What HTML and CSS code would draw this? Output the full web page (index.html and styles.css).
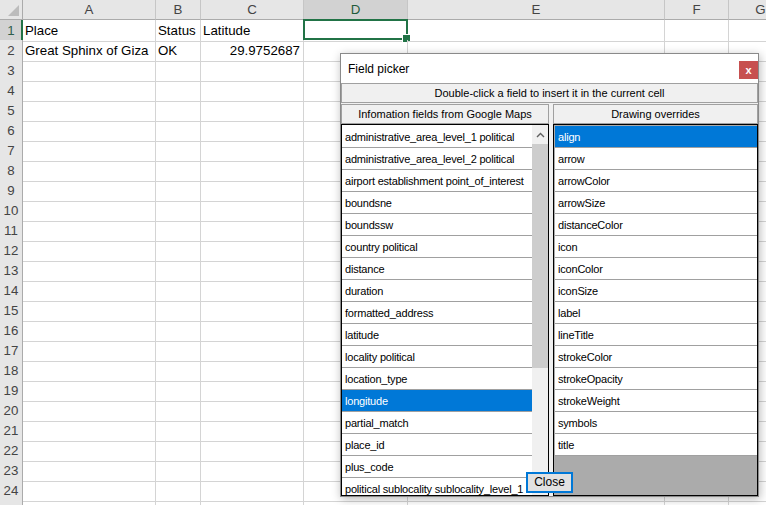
FILE: index.html
```html
<!DOCTYPE html>
<html>
<head>
<meta charset="utf-8">
<title>Field picker</title>
<link rel="stylesheet" href="styles.css">
</head>
<body>
<div class="sheet">
  <div class="row head"><div class="corner"></div><div>A</div><div>B</div><div>C</div><div class="hsel">D</div><div>E</div><div>F</div><div>G</div></div>
  <div class="row"><div class="rh rsel">1</div><div>Place</div><div>Status</div><div>Latitude</div><div class="active"><span class="cursor"></span></div><div></div><div></div><div></div></div>
  <div class="row"><div class="rh">2</div><div>Great Sphinx of Giza</div><div>OK</div><div class="num">29.9752687</div><div></div><div></div><div></div><div></div></div>
  <div class="row"><div class="rh">3</div><div></div><div></div><div></div><div></div><div></div><div></div><div></div></div>
  <div class="row"><div class="rh">4</div><div></div><div></div><div></div><div></div><div></div><div></div><div></div></div>
  <div class="row"><div class="rh">5</div><div></div><div></div><div></div><div></div><div></div><div></div><div></div></div>
  <div class="row"><div class="rh">6</div><div></div><div></div><div></div><div></div><div></div><div></div><div></div></div>
  <div class="row"><div class="rh">7</div><div></div><div></div><div></div><div></div><div></div><div></div><div></div></div>
  <div class="row"><div class="rh">8</div><div></div><div></div><div></div><div></div><div></div><div></div><div></div></div>
  <div class="row"><div class="rh">9</div><div></div><div></div><div></div><div></div><div></div><div></div><div></div></div>
  <div class="row"><div class="rh">10</div><div></div><div></div><div></div><div></div><div></div><div></div><div></div></div>
  <div class="row"><div class="rh">11</div><div></div><div></div><div></div><div></div><div></div><div></div><div></div></div>
  <div class="row"><div class="rh">12</div><div></div><div></div><div></div><div></div><div></div><div></div><div></div></div>
  <div class="row"><div class="rh">13</div><div></div><div></div><div></div><div></div><div></div><div></div><div></div></div>
  <div class="row"><div class="rh">14</div><div></div><div></div><div></div><div></div><div></div><div></div><div></div></div>
  <div class="row"><div class="rh">15</div><div></div><div></div><div></div><div></div><div></div><div></div><div></div></div>
  <div class="row"><div class="rh">16</div><div></div><div></div><div></div><div></div><div></div><div></div><div></div></div>
  <div class="row"><div class="rh">17</div><div></div><div></div><div></div><div></div><div></div><div></div><div></div></div>
  <div class="row"><div class="rh">18</div><div></div><div></div><div></div><div></div><div></div><div></div><div></div></div>
  <div class="row"><div class="rh">19</div><div></div><div></div><div></div><div></div><div></div><div></div><div></div></div>
  <div class="row"><div class="rh">20</div><div></div><div></div><div></div><div></div><div></div><div></div><div></div></div>
  <div class="row"><div class="rh">21</div><div></div><div></div><div></div><div></div><div></div><div></div><div></div></div>
  <div class="row"><div class="rh">22</div><div></div><div></div><div></div><div></div><div></div><div></div><div></div></div>
  <div class="row"><div class="rh">23</div><div></div><div></div><div></div><div></div><div></div><div></div><div></div></div>
  <div class="row"><div class="rh">24</div><div></div><div></div><div></div><div></div><div></div><div></div><div></div></div>
  <div class="row"><div class="rh"></div><div></div><div></div><div></div><div></div><div></div><div></div><div></div></div>
</div>

<div class="dialog">
  <div class="titlebar">
    <span class="title">Field picker</span>
    <span class="xbtn">x</span>
  </div>
  <div class="hint">Double-click a field to insert it in the current cell</div>
  <div class="panels">
    <div class="panel left">
      <div class="phead">Infomation fields from Google Maps</div>
      <div class="list">
        <ul class="items">
          <li>administrative_area_level_1 political</li>
          <li>administrative_area_level_2 political</li>
          <li>airport establishment point_of_interest</li>
          <li>boundsne</li>
          <li>boundssw</li>
          <li>country political</li>
          <li>distance</li>
          <li>duration</li>
          <li>formatted_address</li>
          <li>latitude</li>
          <li>locality political</li>
          <li>location_type</li>
          <li class="sel">longitude</li>
          <li>partial_match</li>
          <li>place_id</li>
          <li>plus_code</li>
          <li>political sublocality sublocality_level_1</li>
        </ul>
        <div class="scrollbar">
          <div class="up"><svg width="9" height="6" viewBox="0 0 9 6"><path d="M1 5 L4.5 1.5 L8 5" fill="none" stroke="#606060" stroke-width="1.4"/></svg></div>
          <div class="thumb"></div>
        </div>
      </div>
    </div>
    <div class="panel right">
      <div class="phead">Drawing overrides</div>
      <div class="list grey">
        <ul class="items">
          <li class="sel">align</li>
          <li>arrow</li>
          <li>arrowColor</li>
          <li>arrowSize</li>
          <li>distanceColor</li>
          <li>icon</li>
          <li>iconColor</li>
          <li>iconSize</li>
          <li>label</li>
          <li>lineTitle</li>
          <li>strokeColor</li>
          <li>strokeOpacity</li>
          <li>strokeWeight</li>
          <li>symbols</li>
          <li>title</li>
        </ul>
      </div>
    </div>
  </div>
  <button class="close">Close</button>
</div>
</body>
</html>
```
FILE: styles.css
```css
* { box-sizing: border-box; }

body {
  margin: 0;
  width: 766px;
  height: 505px;
  overflow: hidden;
  position: relative;
  background: #fff;
  font-family: "Liberation Sans", Arial, sans-serif;
}

/* ---------- spreadsheet ---------- */
.row {
  display: grid;
  grid-template-columns: 23px 133px 45px 103px 104px 257px 64px 64px;
  height: 20px;
}

.row > div {
  border-right: 1px solid #d4d4d4;
  border-bottom: 1px solid #d4d4d4;
  font-size: 13.3px;
  line-height: 21px;
  padding: 0 2px;
  white-space: nowrap;
  color: #000;
  position: relative;
}

.row > .num { text-align: right; padding-right: 3px; }

.head > div {
  background: #e6e6e6;
  border-right-color: #c6c6c6;
  border-bottom-color: #ababab;
  color: #444;
  text-align: center;
  line-height: 19px;
}

.head > .hsel {
  background: #d2d2d2;
  color: #1d5a3a;
}

.head > .corner {
  border-right-color: #ababab;
}

.head > .corner::after {
  content: "";
  position: absolute;
  right: 3px;
  bottom: 3px;
  width: 0;
  height: 0;
  border-left: 11px solid transparent;
  border-bottom: 11px solid #bcbcbc;
}

.row > .rh {
  background: #e6e6e6;
  border-right-color: #ababab;
  border-bottom-color: #c6c6c6;
  color: #444;
  text-align: center;
  padding: 0;
}

.row > .rsel {
  background: #d2d2d2;
  color: #2f5e4a;
  border-right: 1px solid #217346;
  box-shadow: inset -1px 0 0 #217346;
}

.cursor {
  position: absolute;
  left: -1px;
  top: -1px;
  width: 105px;
  height: 21px;
  border: 2px solid #217346;
}

.cursor::after {
  content: "";
  position: absolute;
  right: -5px;
  bottom: -5px;
  width: 7px;
  height: 7px;
  background: #217346;
  border: 1px solid #fff;
}

/* ---------- dialog ---------- */
.dialog {
  position: absolute;
  left: 340px;
  top: 53px;
  width: 419px;
  height: 444px;
  background: #f0f0f0;
  border: 1px solid #8a8a8a;
  box-shadow: 1px 2px 9px rgba(0, 0, 0, 0.28);
  display: flex;
  flex-direction: column;
  font-family: "Liberation Sans", Arial, sans-serif;
  color: #000;
}

.titlebar {
  height: 29px;
  background: #fff;
  display: flex;
  align-items: center;
  justify-content: space-between;
  padding-left: 7px;
}

.title { font-size: 12px; }

.xbtn {
  width: 19px;
  height: 18px;
  margin-top: 3px;
  background: #c75050;
  color: #fff;
  font-size: 11px;
  font-weight: bold;
  display: flex;
  align-items: center;
  justify-content: center;
}

.hint {
  height: 20px;
  border: 1px solid #a0a0a0;
  background: #f0f0f0;
  font-size: 11px;
  line-height: 18px;
  text-align: center;
  margin-bottom: 1px;
}

.panels {
  flex: 1;
  display: flex;
  gap: 4px;
  min-height: 0;
}

.panel {
  display: flex;
  flex-direction: column;
  min-height: 0;
}

.left { width: 208px; }
.right { width: 205px; }

.phead {
  height: 20px;
  border: 1px solid #a0a0a0;
  background: #f0f0f0;
  font-size: 11px;
  line-height: 18px;
  text-align: center;
}

.list {
  flex: 1;
  min-height: 0;
  display: flex;
  border: 1px solid #000;
  background: #fff;
  overflow: hidden;
}

.list.grey {
  background: #ababab;
  padding-left: 1px;
}

.items {
  list-style: none;
  margin: 0;
  padding: 1px 0 0 0;
  flex: 1;
  min-width: 0;
}

.items li {
  height: 22px;
  border-bottom: 1px solid #a0a0a0;
  background: #fff;
  font-size: 11px;
  letter-spacing: -0.2px;
  line-height: 22px;
  padding-left: 3px;
  white-space: nowrap;
  overflow: hidden;
}

.items li.sel {
  background: #0078d7;
  color: #fff;
}

.scrollbar {
  width: 16px;
  background: #f0f0f0;
  display: flex;
  flex-direction: column;
}

.scrollbar .up {
  height: 19px;
  display: flex;
  align-items: center;
  justify-content: center;
}

.scrollbar .thumb {
  height: 224px;
  background: #cdcdcd;
}

.close {
  position: absolute;
  left: 185px;
  top: 418px;
  width: 47px;
  height: 21px;
  padding: 0;
  margin: 0;
  border: 2px solid #0078d7;
  background: #e1e1e1;
  font-family: "Liberation Sans", Arial, sans-serif;
  font-size: 12px;
  color: #000;
  line-height: 17px;
}
```
